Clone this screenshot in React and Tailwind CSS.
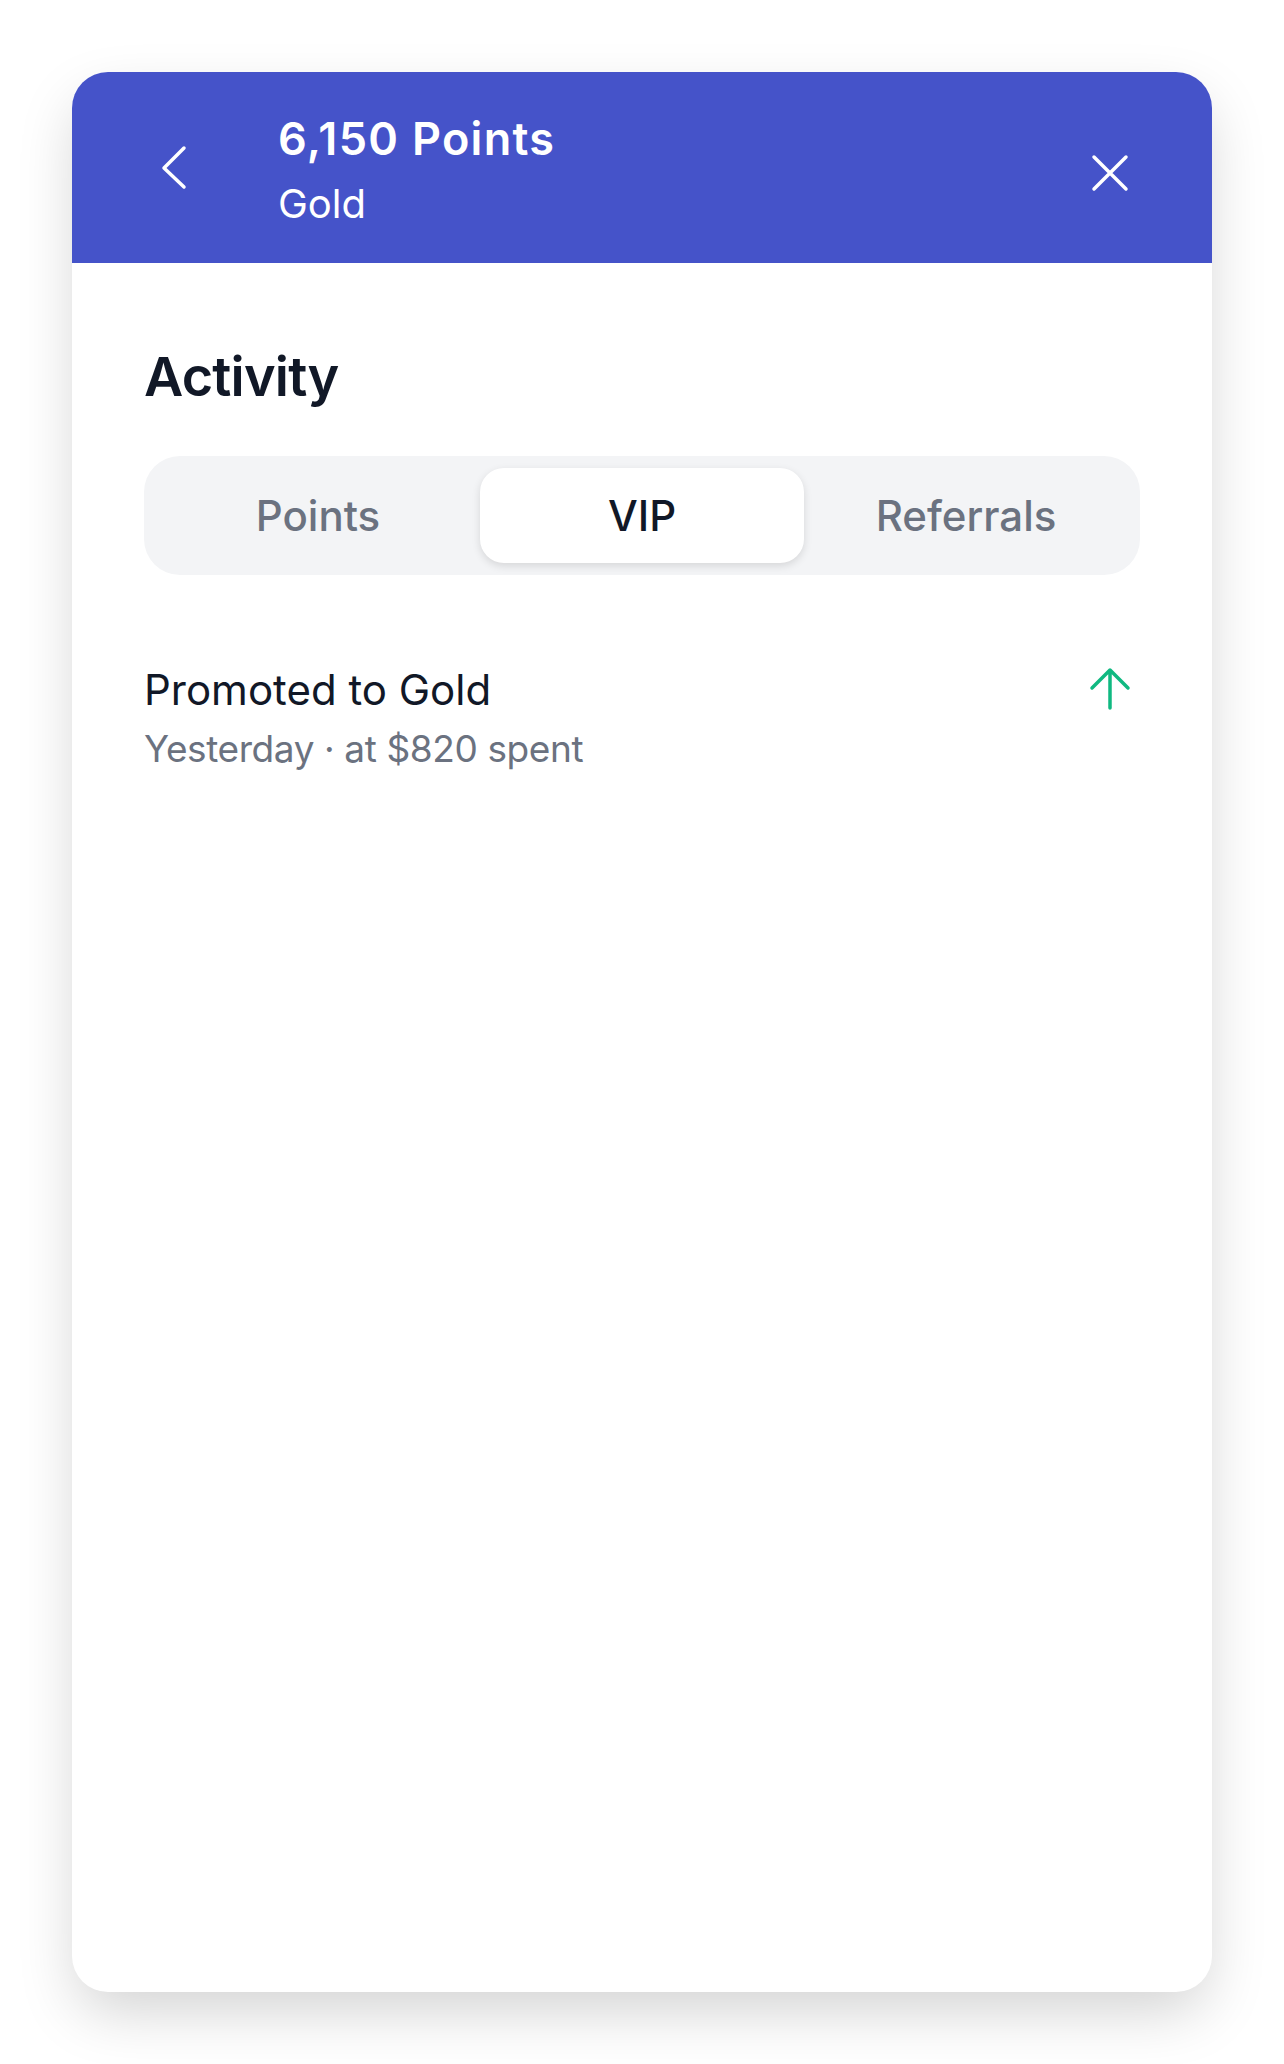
import React, { useState } from 'react';

const tabs = ['Points', 'VIP', 'Referrals'];

const RewardsActivity = () => {
  const [tab, setTab] = useState('VIP');

  return (
    <div className="h-[2064px] bg-white p-[72px] font-['Inter','Noto_Sans',sans-serif]">
      <div className="h-[1920px] bg-white rounded-[36px] overflow-hidden shadow-[0_24px_60px_-6px_rgba(0,0,0,0.18)]">
        {/* Cabecera */}
        <header className="h-[191px] bg-[#4553c9] flex items-start justify-between pl-[78px] pr-[78px] pt-[39px] text-white">
          <div className="flex items-start">
            <button className="mt-[33px] w-[48px] h-[48px]" aria-label="Back">
              <svg viewBox="0 0 48 48" className="w-[48px] h-[48px]" fill="none" stroke="currentColor" strokeWidth="3.5" strokeLinecap="round" strokeLinejoin="round">
                <path d="M34 4 L14 24 L34 43" />
              </svg>
            </button>
            <div className="ml-[80px]">
              <p className="text-[45px] leading-[56px] font-semibold tracking-[1.3px]">6,150 Points</p>
              <p className="mt-[9px] text-[40px] leading-[56px]">Gold</p>
            </div>
          </div>
          <button className="mt-[38px] w-[48px] h-[48px]" aria-label="Close">
            <svg viewBox="0 0 48 48" className="w-[48px] h-[48px]" fill="none" stroke="currentColor" strokeWidth="3.5" strokeLinecap="round">
              <path d="M8 8 L40 40 M40 8 L8 40" />
            </svg>
          </button>
        </header>

        <div className="px-[72px] pt-[81px]">
          <h1 className="text-[54px] leading-[66px] font-semibold tracking-[-0.8px] text-[#111827]">Activity</h1>

          {/* Selector de pestañas */}
          <div className="mt-[46px] h-[119px] grid grid-cols-3 p-[12px] bg-[#f3f4f6] rounded-[36px]">
            {tabs.map((t) => (
              <button
                key={t}
                onClick={() => setTab(t)}
                className={
                  t === tab
                    ? 'rounded-[24px] bg-white text-[#111827] text-[42px] font-medium shadow-[0_3px_9px_rgba(0,0,0,0.12)]'
                    : 'rounded-[24px] text-[#6b7280] text-[42px] font-medium'
                }
              >
                {t}
              </button>
            ))}
          </div>

          {/* Movimiento */}
          <div className="mt-[88px] flex items-start justify-between">
            <div>
              <p className="text-[42px] leading-[54px] text-[#111827]">Promoted to Gold</p>
              <p className="mt-[7px] text-[37px] leading-[50px] tracking-[-0.4px] text-[#6b7280]">Yesterday · at $820 spent</p>
            </div>
            <svg viewBox="0 0 48 48" className="mt-[2px] mr-[6px] w-[48px] h-[48px] text-[#10b981]" fill="none" stroke="currentColor" strokeWidth="3.5" strokeLinecap="round" strokeLinejoin="round">
              <path d="M24 43 L24 5 M6 23 L24 5 L42 23" />
            </svg>
          </div>
        </div>
      </div>
    </div>
  );
};

export default RewardsActivity;
